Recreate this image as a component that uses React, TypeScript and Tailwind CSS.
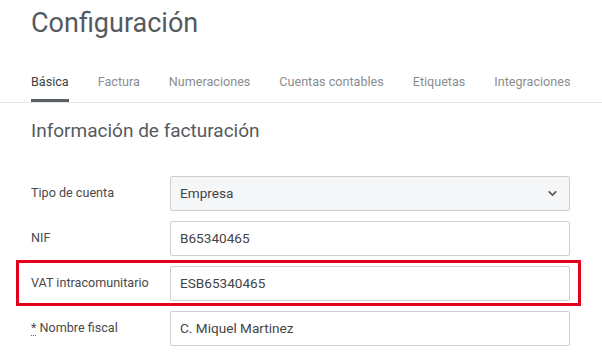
import React from 'react';
import { ChevronDown } from 'lucide-react';

const tabs = ['Básica', 'Factura', 'Numeraciones', 'Cuentas contables', 'Etiquetas', 'Integraciones'];

const Field: React.FC<{ label: React.ReactNode; value: string; select?: boolean }> = ({ label, value, select }) => (
  <div className="flex items-center">
    <div className="w-[139px] text-[12.6px] text-[#4a4a4a] whitespace-nowrap">{label}</div>
    <div
      className={`flex items-center justify-between w-[400px] h-[35px] px-[9px] border border-[#cfcfcf] rounded-[2px] text-[13.6px] text-[#444] ${
        select ? 'bg-[#f5f6f7]' : 'bg-white'
      }`}
    >
      <span>{value}</span>
      {select && <ChevronDown size={13} strokeWidth={3} className="text-[#555] mr-[1px]" />}
    </div>
  </div>
);

export default function App() {
  return (
    <div className="w-[602px] h-[353px] overflow-hidden bg-white" style={{ fontFamily: 'Roboto, sans-serif' }}>
      {/* Título */}
      <div className="pl-[31px] pt-[3px] h-[62px]">
        <h1 className="text-[27px] leading-[40px] text-[#555a5f]">Configuración</h1>
      </div>

      {/* Pestañas */}
      <div className="flex gap-[29px] pl-[31px] border-b border-[#e6e6e6] h-[41px]">
        {tabs.map((t, i) => (
          <div
            key={t}
            className={`pt-[11px] text-[12.6px] whitespace-nowrap ${
              i === 0 ? 'text-[#3a3f44] border-b-[3px] border-[#5a5f64]' : 'text-[#8a8d90]'
            }`}
          >
            {t}
          </div>
        ))}
      </div>

      {/* Información de facturación */}
      <div className="pl-[31px] pr-[32px]">
        <h2 className="mt-[15px] text-[19px] leading-[26px] text-[#555a5f]">Información de facturación</h2>

        <div className="flex flex-col gap-[10px] mt-[32px]">
          <Field label="Tipo de cuenta" value="Empresa" select />
          <Field label="NIF" value="B65340465" />
          <div className="relative">
            <Field label="VAT intracomunitario" value="ESB65340465" />
            <div className="absolute -left-[15px] -right-[11px] -top-[6px] -bottom-[5px] border-[3px] border-[#e2001a] pointer-events-none" />
          </div>
          <Field
            label={
              <span>
                <abbr className="no-underline border-b border-dotted border-[#666]">*</abbr> Nombre fiscal
              </span>
            }
            value="C. Miquel Martinez"
          />
        </div>
      </div>
    </div>
  );
}
